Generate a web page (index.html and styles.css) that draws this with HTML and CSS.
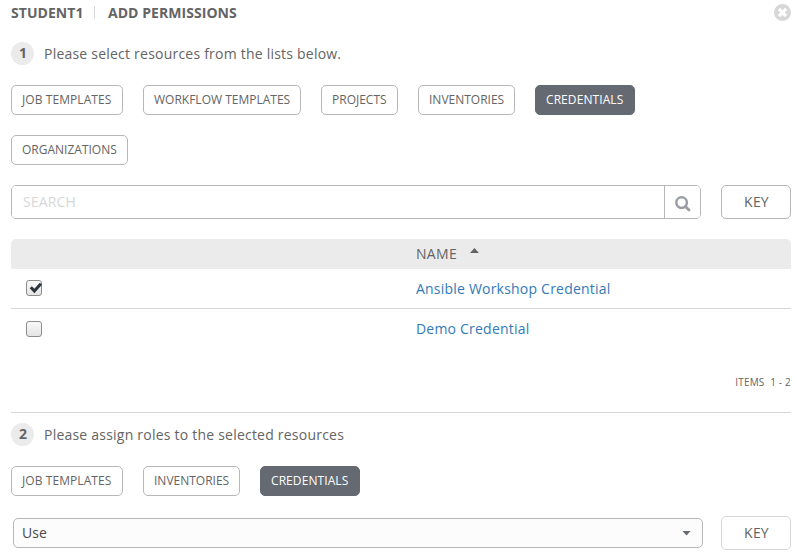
FILE: index.html
```html
<!DOCTYPE html>
<html lang="en">
<head>
<meta charset="utf-8">
<title>Add Permissions</title>
<link rel="stylesheet" href="styles.css">
</head>
<body>
<main class="modal">
  <header class="header">
    <h1 class="title"><span class="title-user">STUDENT1</span><span class="title-action">ADD PERMISSIONS</span></h1>
    <button class="close" aria-label="Close">
      <svg width="17" height="17" viewBox="0 0 17 17"><circle cx="8.5" cy="8.5" r="8.5" fill="#d7d7d7"/><path d="M4.9 4.9l7.2 7.2M12.1 4.9l-7.2 7.2" stroke="#fff" stroke-width="3.2"/></svg>
    </button>
  </header>

  <section>
    <div class="step"><span class="step-number">1</span><span class="step-text">Please select resources from the lists below.</span></div>
    <div class="tabs">
      <button class="tab job">JOB TEMPLATES</button>
      <button class="tab workflow">WORKFLOW TEMPLATES</button>
      <button class="tab projects">PROJECTS</button>
      <button class="tab inventories">INVENTORIES</button>
      <button class="tab credentials active">CREDENTIALS</button>
      <button class="tab organizations">ORGANIZATIONS</button>
    </div>
    <div class="search-row">
      <div class="search">
        <input class="search-input" type="text" placeholder="SEARCH">
        <button class="search-button" aria-label="Search">
          <svg width="16" height="16" viewBox="0 0 16 16" fill="none" stroke="#999da4"><circle cx="6.6" cy="6.6" r="5.3" stroke-width="2.5"/><path d="M10.4 10.4l3.6 3.6" stroke-width="2.8" stroke-linecap="round"/></svg>
        </button>
      </div>
      <button class="key">KEY</button>
    </div>
    <div class="table">
      <div class="row head"><span></span><span class="name-head">NAME<i class="sort"></i></span></div>
      <div class="row item"><span class="check checked"><svg width="15" height="14" viewBox="0 0 15 14"><path d="M3.8 6.2l3.6 3.9 6.5-7.3" fill="none" stroke="#2d353c" stroke-width="3"/></svg></span><a>Ansible Workshop Credential</a></div>
      <div class="row item"><span class="check"></span><a>Demo Credential</a></div>
    </div>
    <div class="items">ITEMS&nbsp; 1 - 2</div>
  </section>

  <section class="roles">
    <div class="step"><span class="step-number">2</span><span class="step-text">Please assign roles to the selected resources</span></div>
    <div class="tabs">
      <button class="tab job">JOB TEMPLATES</button>
      <button class="tab inventories">INVENTORIES</button>
      <button class="tab credentials active">CREDENTIALS</button>
    </div>
    <div class="role-row">
      <div class="select"><span>Use</span><i class="caret"></i></div>
      <button class="key light">KEY</button>
    </div>
  </section>
</main>
</body>
</html>
```
FILE: styles.css
```css
* { box-sizing: border-box; }
body { margin: 0; background: #fff; color: #646464; font: 14px/20px "Open Sans", "Noto Sans", sans-serif; }
button, input { font: inherit; color: inherit; margin: 0; padding: 0; background: #fff; }
.modal { width: 780px; height: 560px; margin-left: 11px; overflow: hidden; }
.header { display: flex; justify-content: space-between; height: 42px; padding-top: 3px; }
.title { display: flex; margin: 0; font-size: 14px; line-height: 20px; font-weight: 700; letter-spacing: .05px; }
.title-user { width: 84px; }
.title-action { position: relative; padding-left: 13px; }
.title-action::before { content: ""; position: absolute; left: -1px; top: 3px; width: 1px; height: 13px; background: #d7d7d7; }
.close { width: 17px; height: 17px; margin-top: 1px; border: 0; }
.close svg { display: block; }
.step { display: flex; align-items: center; height: 23px; }
.step-number { width: 23px; height: 23px; margin-right: 10px; padding-left: 1px; border-radius: 50%; background: #ebebeb; text-align: center; line-height: 22px; font-weight: 700; }
.step-text { letter-spacing: .22px; }
.tabs { display: flex; flex-wrap: wrap; gap: 20px; margin-top: 20px; padding-right: 20px; }
.tab { height: 30px; padding: 0 0 1px 10px; text-align: left; border: 1px solid #b7b7b7; border-radius: 5px; font-size: 12px; white-space: nowrap; }
.job { width: 112px; letter-spacing: .08px; }
.workflow { width: 158px; }
.projects { width: 77px; }
.inventories { width: 97px; }
.credentials { width: 100px; letter-spacing: .08px; }
.organizations { width: 117px; }
.active { background: #646972; border-color: #646972; color: #fff; }
.search-row { display: flex; gap: 20px; margin-top: 20px; }
.search { display: flex; width: 690px; height: 34px; border: 1px solid #b7b7b7; border-radius: 5px; overflow: hidden; }
.search-input { flex: 1; min-width: 0; border: 0; padding-left: 11px; outline: 0; letter-spacing: .15px; }
.search-input::placeholder { color: #d7d7d7; opacity: 1; }
.search-button { width: 36px; border: 0; border-left: 1px solid #b7b7b7; padding: 3px 0 0; }
.search-button svg { display: block; margin: 0 auto; }
.key { width: 70px; height: 34px; padding-left: 1px; border: 1px solid #b7b7b7; border-radius: 5px; letter-spacing: .2px; }
.light { border-color: #d7d7d7; }
.table { margin-top: 20px; }
.row { display: grid; grid-template-columns: 405px 1fr; align-items: center; }
.head { height: 30px; border-radius: 5px 5px 0 0; background: #ebebeb; }
.name-head { display: flex; letter-spacing: .3px; }
.sort { margin: 4px 0 0 13px; width: 9px; height: 5px; background: #646464; clip-path: polygon(50% 0, 100% 100%, 0 100%); }
.item { height: 40px; color: #337ab7; }
.item:not(:last-child) { border-bottom: 1px solid #d7d7d7; }
.item a { justify-self: start; letter-spacing: .21px; }
.check { width: 16px; height: 16px; margin-left: 15px; border: 1px solid #8d8d88; border-radius: 3px; background: linear-gradient(#fafafa, #e3e3e3); }
.checked { margin-bottom: 1px; }
.check svg { display: block; }
.items { margin-top: 23px; height: 20px; text-align: right; font-size: 10px; white-space: nowrap; letter-spacing: .2px; }
.roles { margin-top: 20px; padding-top: 10px; border-top: 1px solid #d7d7d7; }
.role-row { display: flex; align-items: center; justify-content: space-between; margin-top: 20px; padding-left: 2px; }
.select { display: flex; align-items: center; justify-content: space-between; width: 690px; height: 30px; padding: 0 11px 0 8px; border: 1px solid #b7b7b7; border-radius: 5px; background: #fcfcfc; color: #484848; letter-spacing: .1px; }
.caret { width: 9px; height: 5px; background: #646972; clip-path: polygon(0 0, 100% 0, 50% 100%); }
```
